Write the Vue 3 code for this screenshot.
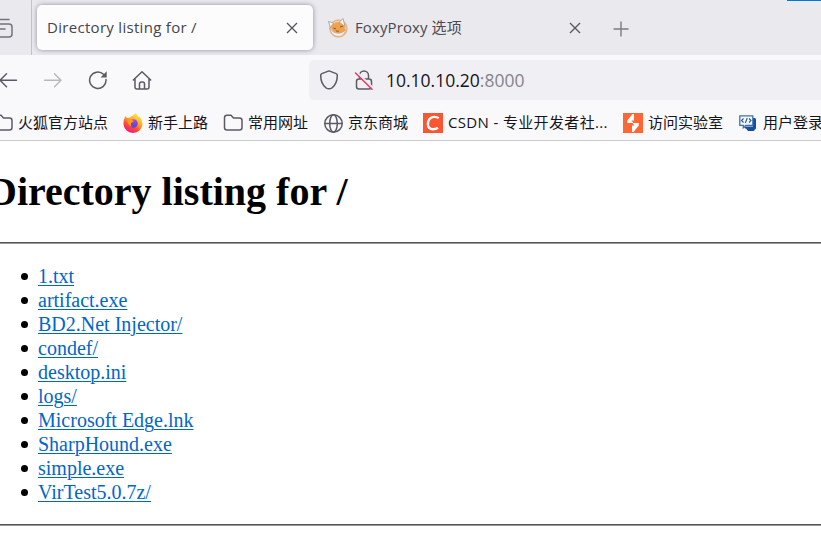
<script setup>
const bookmarks = [
  { icon: 'folder', label: '火狐官方站点' },
  { icon: 'firefox', label: '新手上路' },
  { icon: 'folder', label: '常用网址' },
  { icon: 'globe', label: '京东商城' },
  { icon: 'csdn', label: 'CSDN - 专业开发者社...' },
  { icon: 'burp', label: '访问实验室' },
  { icon: 'code', label: '用户登录' },
]
const files = [
  '1.txt', 'artifact.exe', 'BD2.Net Injector/', 'condef/', 'desktop.ini',
  'logs/', 'Microsoft Edge.lnk', 'SharpHound.exe', 'simple.exe', 'VirTest5.0.7z/',
]
</script>

<template>
  <div class="window">
    <div class="tabs">
      <div class="view">
        <svg class="line" width="20" height="24" viewBox="0 0 20 24"><path d="M3 3.500h12M3 8h12q3 0 3 3v7q0 3-3 3H3M5 13h6" /></svg>
      </div>
      <div class="tab active">
        <span class="title">Directory listing for /</span>
        <svg class="x" width="12" height="12" viewBox="0 0 12 12"><path d="M1 1l10 10M11 1L1 11" /></svg>
      </div>
      <div class="tab second">
        <svg class="fox" width="20" height="20" viewBox="0 0 20 20">
          <circle cx="10.500" cy="10.500" r="8.500" fill="#d8d2cd" stroke="#f0b67c" stroke-width="1.500" />
          <path d="M.5 3.500l5 1.500-3 5zM11 4.500L15 .5l2 8z" fill="#fff7ec" stroke="#9f9790" stroke-width=".8" />
          <path d="M3 8q4-4 9-4l4 4 1.500 5q-4 4-8.500 2-5-1-6-7z" fill="#f3a04b" />
          <path d="M1.500 10q3 5 8 5.500 5 0 8-3.500-1 5-5 6-8 2-11-8z" fill="#f5f3f1" stroke="#aaa39e" stroke-width=".5" />
          <path d="M5.500 10l2.500 1M12 9l3-1M8 13l3 .3" stroke="#8a6040" stroke-width="1.100" fill="none" />
        </svg>
        <span class="title">FoxyProxy 选项</span>
        <svg class="x" width="12" height="12" viewBox="0 0 12 12"><path d="M1 1l10 10M11 1L1 11" /></svg>
      </div>
      <svg class="plus" width="16" height="16" viewBox="0 0 16 16"><path d="M8 .5v15M.5 8h15" /></svg>
      <div class="accent"></div>
    </div>

    <div class="toolbar">
      <div class="nav">
        <svg class="line" width="20" height="20" viewBox="0 0 20 20"><path d="M18.500 10.300H2M8.500 3.800L2 10.300l6.500 6.500" /></svg>
        <svg class="line dim" width="20" height="20" viewBox="0 0 20 20"><path d="M1.500 10.300H18M11.500 3.800l6.500 6.500-6.500 6.500" /></svg>
        <svg class="line" width="20" height="20" viewBox="0 0 20 20"><path d="M18 9.500A8.200 8.200 0 1 1 15.500 4.300" /><path class="solid" d="M18.700 1.300v6.200H12.500z" /></svg>
        <svg class="line home" width="20" height="20" viewBox="0 0 20 20"><path d="M1.300 10L10 1.800 18.700 10M3 8.800v8.200q0 2 2 2h10q2 0 2-2V8.800M7.500 19v-5q0-2 2-2h1q2 0 2 2v5" /></svg>
      </div>
      <div class="urlbar">
        <svg class="line" width="20" height="20" viewBox="0 0 20 20"><path d="M10 .9l7.200 2.700q1.200.5 1.100 1.900-.1 8.500-5.300 12.300-3 2-6 0Q1.800 14 1.700 5.500 1.600 4.100 2.800 3.600z" /></svg>
        <svg class="line lock" width="20" height="20" viewBox="0 0 20 20"><path d="M5.500 9V5.500a4.500 4.500 0 0 1 9 0V9M5 9h10q2.500 0 2.500 2.500v5Q17.500 19 15 19H5q-2.500 0-2.500-2.500v-5Q2.500 9 5 9z" /><path class="gap" d="M2 1.500L19 18" /><path class="slash" d="M1.500 3L18 19.300" /></svg>
        <span class="url">10.10.10.20<span class="port">:8000</span></span>
      </div>
    </div>

    <div class="bookmarks">
      <div v-for="b in bookmarks" :key="b.label" class="bookmark" :class="b.icon">
        <svg v-if="b.icon === 'folder'" class="line" width="20" height="20" viewBox="0 0 20 20"><path d="M4 2.200h4l2.500 2.700h6q2.500 0 2.500 2.500v7q0 2.500-2.500 2.500H4q-2.500 0-2.500-2.500V4.700Q1.500 2.200 4 2.200z" /></svg>
        <svg v-else-if="b.icon === 'firefox'" width="20" height="20" viewBox="0 0 20 20">
          <defs>
            <linearGradient id="flame" x1=".8" y1="0" x2=".25" y2="1"><stop offset="0" stop-color="#fff44f" /><stop offset=".4" stop-color="#ffad1f" /><stop offset=".7" stop-color="#ff453d" /><stop offset="1" stop-color="#e6158a" /></linearGradient>
            <linearGradient id="orb" x1="0" y1="0" x2="0" y2="1"><stop offset="0" stop-color="#9b4df5" /><stop offset="1" stop-color="#5e40c4" /></linearGradient>
          </defs>
          <path d="M2.500 3l1.500 2 3-.5Q8 3 10 2.500q2-2 2.500-2.500 1.500 1.500 3 4l1-.5q3 3.500 3 7.500a9.500 9 0 0 1-19 0Q.5 6 2.500 3z" fill="url(#flame)" />
          <circle cx="10.500" cy="10.500" r="4.300" fill="url(#orb)" />
          <path d="M4 7q3-2 5 0l2 1q-2 1.500-3 2-1 3 2 4-4-.5-5-4z" fill="#ff9a20" />
        </svg>
        <svg v-else-if="b.icon === 'globe'" class="line" width="20" height="20" viewBox="0 0 20 20"><circle cx="10.500" cy="10.500" r="8.700" /><ellipse cx="10.500" cy="10.500" rx="3.800" ry="8.700" /><path d="M2 10.500h17" /></svg>
        <svg v-else-if="b.icon === 'csdn'" width="20" height="20" viewBox="0 0 20 20"><path fill="#fc5531" d="M0 0h20v20H0z" /><path d="M15.700 5.300Q13.500 3.700 11 3.900 5.300 4.300 4.900 11q0 5.200 5.100 5.200 2.700 0 5-1.500" fill="none" stroke="#fff" stroke-width="2.400" /></svg>
        <svg v-else-if="b.icon === 'burp'" width="20" height="20" viewBox="0 0 20 20"><path fill="#ff6633" d="M0 0h20v20H0z" /><path fill="#fff" d="M11 1v6.500H8.500L10.500 10H15.800v2.500L10.500 19H9v-6.500h2.500L9.500 10H4.300V7.500L9.500 1z" /></svg>
        <svg v-else width="20" height="20" viewBox="0 0 20 20"><path fill="#164f96" d="M15 5h1.500q1.500 0 1.500 1.500V15q0 1.500-1.500 1.500V17q0 1-1 1H10l-2-2.500h-1l-1-2h9z" /><path d="M1.800 2.800h13v9.500h-7l-2.500 2.500v-2.500H1.800z" fill="#f4f8fd" stroke="#3f71ad" stroke-width="1.300" /><path d="M5.500 5.500l-2 2 2 2M11 5.500l2 2-2 2M9.300 5L7.300 10" fill="none" stroke="#28599a" stroke-width="1.100" /></svg>
        <span class="label">{{ b.label }}</span>
      </div>
    </div>

    <main class="page">
      <h1>Directory listing for /</h1>
      <hr>
      <ul>
        <li v-for="f in files" :key="f"><a href="#">{{ f }}</a></li>
      </ul>
      <hr>
    </main>
  </div>
</template>

<style>
body { margin: 0; background: #fff; }
</style>

<style scoped>
.window { width: 821px; height: 556px; overflow: hidden; background: #fff; font-family: "Open Sans", "Noto Sans CJK SC", sans-serif; color: #15141a; }
svg { flex: none; display: block; }
.line { fill: none; stroke: #5b5b66; stroke-width: 1.5; stroke-linecap: round; stroke-linejoin: round; }
.dim { stroke: #b9b8bf; }
.solid { fill: #5b5b66; stroke: none; }
.tabs { height: 55px; display: flex; align-items: center; background: #eae9ee; }
.view { box-sizing: border-box; width: 32px; height: 55px; border-right: 1px solid #c3c2c8; display: flex; align-items: center; }
.view svg { margin: 1px 0 0 -6px; stroke: #74737c; }
.tab { box-sizing: border-box; display: flex; align-items: center; height: 45px; font-size: 15px; color: #4a4a4f; white-space: nowrap; }
.title { padding-bottom: 2px; }
.active { width: 276px; margin-left: 5px; padding: 0 15px 0 10px; background: #fcfcfd; border-radius: 5px; box-shadow: 0 0 5px #8f8e9a; color: #45454b; letter-spacing: .3px; }
.tab .x { margin-left: auto; }
.second { width: 283px; padding: 0 15px; letter-spacing: .1px; }
.fox { margin-right: 7px; }
.x { fill: none; stroke: #55555b; stroke-width: 1.3; }
.plus { fill: none; stroke: #7c7b83; stroke-width: 1.4; margin: 2px 0 0 17px; }
.accent { align-self: flex-start; width: 34px; height: 1px; margin-left: auto; background: #0078d7; }
.toolbar { height: 50px; display: flex; align-items: center; justify-content: space-between; background: #f9f9fb; }
.nav { display: flex; gap: 25px; margin-left: -2px; }
.home { margin-left: -1px; }
.urlbar { box-sizing: border-box; width: 512px; height: 40px; padding-left: 10px; display: flex; align-items: center; background: #f0eff4; border-radius: 5px 0 0 5px; }
.lock { margin-left: 15px; }
.lock .gap { stroke: #f0eff4; stroke-width: 2; }
.lock .slash { stroke: #eb3c68; stroke-width: 1.6; }
.url { margin-left: 12px; font-size: 17.500px; white-space: nowrap; }
.port { color: #85848c; }
.bookmarks { box-sizing: border-box; height: 36px; padding-top: 1px; margin-left: -7px; display: grid; grid-template-columns: 130px 100px 100px 100px 200px 115px 90px; align-items: center; background: #f9f9fb; border-bottom: 1px solid #ccc; }
.bookmark { display: flex; align-items: center; gap: 5px; font-size: 15px; line-height: 20px; white-space: nowrap; }
.label { padding-bottom: 3px; }
.csdn { letter-spacing: .35px; }
.page { margin: 0 -12px; font-family: "Liberation Serif", serif; font-size: 20px; line-height: 24px; color: #000; }
h1 { margin: 0; padding: 28px 0 27px; font-size: 40px; line-height: 46px; }
hr { margin: 0; border: 0; height: 1px; background: #555; border-bottom: 1px solid #999; }
ul { margin: 0; padding: 20px 0 20px 50px; list-style: none; }
li { display: flex; align-items: center; }
li::before { content: ""; width: 7px; height: 7px; margin: 1px 10px 0 -17px; border-radius: 50%; background: #000; }
a { color: #0066cc; text-decoration: underline; text-underline-offset: 2px; text-decoration-thickness: 1px; }
</style>
